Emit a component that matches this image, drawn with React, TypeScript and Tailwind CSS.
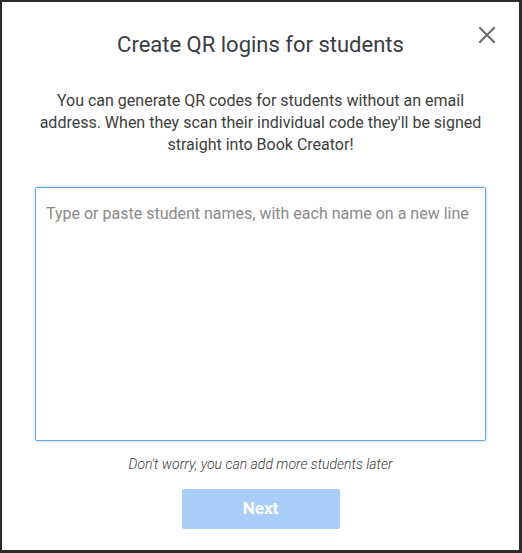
import React, { useState } from 'react';

function CloseIcon() {
  return (
    <svg width="18" height="18" viewBox="0 0 18 18" fill="none" stroke="#6b6b6b" strokeWidth="2" strokeLinecap="square">
      <path d="M2 2L16 16M16 2L2 16" />
    </svg>
  );
}

function App() {
  const [names, setNames] = useState('');

  return (
    <div className="w-[522px] h-[553px] bg-white border-t-2 border-l-2 border-r-[3px] border-b-[3px] border-[#2a2a2a] relative font-['Roboto',sans-serif]">
      <button className="absolute right-[23px] top-[24px] p-0">
        <CloseIcon />
      </button>
      <div className="flex flex-col items-center">
        <h1 className="mt-[29px] text-[22px] leading-[28px] text-[#3a3d42]">Create QR logins for students</h1>
        <p className="mt-[31px] w-[456px] text-center text-[16px] leading-[22px] text-[#3d3d3d]">
          You can generate QR codes for students without an email address. When they scan their individual code they'll be signed straight into Book Creator!
        </p>
        <textarea
          autoFocus
          value={names}
          onChange={(e) => setNames(e.target.value)}
          placeholder="Type or paste student names, with each name on a new line"
          className="mt-[31px] w-[451px] h-[254px] resize-none border border-[#6aa7ea] rounded-[2px] shadow-[0_0_3px_#9cc6f3] px-[10px] py-[15px] text-[16px] leading-[22px] text-[#333] placeholder:text-[#8a8a8a] outline-none caret-[#333]"
        />
        <p className="mt-[13px] text-[14px] leading-[20px] italic font-light text-[#3a3a3a]">Don't worry, you can add more students later</p>
        <button className="mt-[15px] w-[158px] h-[40px] rounded-[2px] bg-[#a8cdf8] text-white text-[17px] font-bold">Next</button>
      </div>
    </div>
  );
}

export default App;
